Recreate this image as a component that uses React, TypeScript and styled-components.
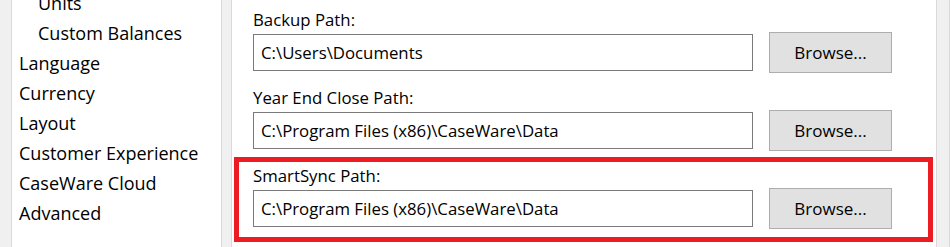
import React from 'react';
import styled, { createGlobalStyle } from 'styled-components';

const GlobalStyle = createGlobalStyle`
  html, body {
    margin: 0;
    padding: 0;
    background: #ffffff;
  }
  body {
    font-family: 'Open Sans', 'Noto Sans', sans-serif;
    color: #000000;
  }
`;

type NavItem = { label: string; nested?: boolean };

const navItems: NavItem[] = [
  { label: 'Units', nested: true },
  { label: 'Custom Balances', nested: true },
  { label: 'Language' },
  { label: 'Currency' },
  { label: 'Layout' },
  { label: 'Customer Experience' },
  { label: 'CaseWare Cloud' },
  { label: 'Advanced' },
];

type PathRow = { label: string; value: string; highlighted?: boolean };

const pathRows: PathRow[] = [
  { label: 'Backup Path:', value: 'C:\\Users\\Documents' },
  { label: 'Year End Close Path:', value: 'C:\\Program Files (x86)\\CaseWare\\Data' },
  {
    label: 'SmartSync Path:',
    value: 'C:\\Program Files (x86)\\CaseWare\\Data',
    highlighted: true,
  },
];

export default function App(): JSX.Element {
  return (
    <>
      <GlobalStyle />
      <Window_div>
        <Gutter_div />
        <NavPane_div>
          <NavList_ul>
            {navItems.map((item) => (
              <NavItem_li key={item.label} $nested={item.nested}>
                {item.label}
              </NavItem_li>
            ))}
          </NavList_ul>
        </NavPane_div>
        <Splitter_div />
        {/* Settings */}
        <Main_div>
          {pathRows.map((row) => (
            <Row_div key={row.label} $highlighted={row.highlighted}>
              <Label_p>{row.label}</Label_p>
              <Field_div>
                <PathBox_div>{row.value}</PathBox_div>
                <Browse_button type='button'>Browse...</Browse_button>
              </Field_div>
            </Row_div>
          ))}
        </Main_div>
        <Scrollbar_div />
      </Window_div>
    </>
  );
}
// --------------- Styled ---------------
const Window_div = styled.div`
  display: flex;
  width: 950px;
  height: 247px;
  overflow: hidden;
  background: #ffffff;
`;
const Gutter_div = styled.div`
  width: 11px;
  flex: none;
  background: #f0f0f0;
  border-right: 1px solid #d9d9d9;
`;
const NavPane_div = styled.div`
  width: 209px;
  flex: none;
  overflow: hidden;
  background: #ffffff;
`;
const NavList_ul = styled.ul`
  list-style: none;
  margin: -12px 0 0;
  padding: 0;
`;
const NavItem_li = styled.li<{ $nested?: boolean }>`
  height: 30px;
  line-height: 30px;
  font-size: 18px;
  white-space: nowrap;
  padding-left: ${({ $nested }) => ($nested ? '26px' : '7px')};
`;
const Splitter_div = styled.div`
  width: 9px;
  flex: none;
  background: #f0f0f0;
  border-left: 1px solid #d9d9d9;
  border-right: 1px solid #d9d9d9;
`;
const Main_div = styled.div`
  width: 704px;
  flex: none;
  box-sizing: border-box;
  padding: 1px 0 0 21px;
  display: flex;
  flex-direction: column;
`;
const Row_div = styled.div<{ $highlighted?: boolean }>`
  position: relative;
  height: 78px;
  flex: none;

  &::after {
    content: '';
    display: ${({ $highlighted }) => ($highlighted ? 'block' : 'none')};
    position: absolute;
    top: 0;
    bottom: -7px;
    left: -19px;
    right: 3px;
    border: 5px solid #ed1c24;
    pointer-events: none;
  }
`;
const Label_p = styled.p`
  margin: 7px 0 0;
  font-size: 16.8px;
  line-height: 24px;
  white-space: nowrap;
`;
const Field_div = styled.div`
  display: flex;
  align-items: center;
  gap: 16px;
  height: 41px;
`;
const PathBox_div = styled.div`
  width: 500px;
  height: 37px;
  box-sizing: border-box;
  border: 1px solid #7a7a7a;
  padding-left: 7px;
  display: flex;
  align-items: center;
  font-size: 16.8px;
  white-space: nowrap;
  background: #ffffff;
`;
const Browse_button = styled.button`
  width: 123px;
  height: 41px;
  box-sizing: border-box;
  border: 1px solid #adadad;
  background: #e1e1e1;
  font-family: 'Open Sans', 'Noto Sans', sans-serif;
  font-size: 17px;
  color: #000000;
  padding: 0;
`;
const Scrollbar_div = styled.div`
  width: 12px;
  flex: none;
  background: #f0f0f0;
  border-left: 1px solid #d9d9d9;
  border-right: 1px solid #d9d9d9;
`;
